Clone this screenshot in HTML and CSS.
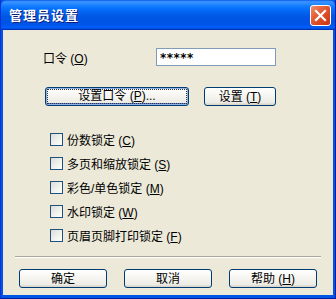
FILE: index.html
```html
<!DOCTYPE html>
<html lang="zh-CN">

<head>
  <meta charset="UTF-8" />
  <meta name="viewport" content="width=device-width, initial-scale=1.0" />
  <title>管理员设置</title>
  <link rel="stylesheet" href="styles.css">
</head>

<body>

  <div class="window">
    <div class="title-bar">
      <span class="title-text">管理员设置</span>
      <button class="close-btn" aria-label="关闭">
        <svg width="13" height="13" viewBox="0 0 13 13">
          <path d="M2 2 L11 11 M11 2 L2 11" stroke="white" stroke-width="2.2" stroke-linecap="square" />
        </svg>
      </button>
    </div>

    <div class="content">
      <div class="pw-row">
        <label class="pw-label">口令 (<u>O</u>)</label>
        <div class="pw-input">*****</div>
      </div>

      <div class="btn-row">
        <button class="btn btn-default wide-btn"><span class="focus">设置口令 (<u>P</u>)...</span></button>
        <button class="btn set-btn">设置 (<u>T</u>)</button>
      </div>

      <div class="checks">
        <label class="check-row"><span class="checkbox"></span><span>份数锁定 (<u>C</u>)</span></label>
        <label class="check-row"><span class="checkbox"></span><span>多页和缩放锁定 (<u>S</u>)</span></label>
        <label class="check-row"><span class="checkbox"></span><span>彩色/单色锁定 (<u>M</u>)</span></label>
        <label class="check-row"><span class="checkbox"></span><span>水印锁定 (<u>W</u>)</span></label>
        <label class="check-row"><span class="checkbox"></span><span>页眉页脚打印锁定 (<u>F</u>)</span></label>
      </div>

      <div class="separator"></div>

      <div class="footer">
        <button class="btn foot-btn">确定</button>
        <button class="btn foot-btn">取消</button>
        <button class="btn foot-btn">帮助 (<u>H</u>)</button>
      </div>
    </div>
  </div>

</body>

</html>
```

FILE: styles.css
```css
body {
  margin: 0;
  font-family: "Liberation Sans", "Noto Sans CJK SC", sans-serif;
  font-size: 12px;
  color: black;
}

.window {
  width: 336px;
  height: 299px;
  box-sizing: border-box;
  background-color: #0055e5;
  border-left: 1px solid #0831d9;
  border-right: 1px solid #001ea0;
  border-bottom: 1px solid #001ea0;
  padding: 0 2px 3px 2px;
  display: flex;
  flex-direction: column;
}

/* Luna style title bar */
.title-bar {
  height: 30px;
  margin: 0 -2px;
  padding: 0 4px 0 8px;
  display: flex;
  align-items: center;
  justify-content: space-between;
  background: linear-gradient(to bottom,
      #0a5ce8 0%, #3d95ff 6%, #2b8bff 12%, #127dff 20%,
      #056ffc 30%, #0262ee 42%, #0057e5 55%, #0054e3 70%,
      #0055eb 82%, #005bf5 90%, #0060f7 94%, #0033b8 97%, #0033b8 100%);
  border-radius: 6px 6px 0 0;
}

.title-text {
  color: white;
  font-family: "Noto Sans CJK SC", sans-serif;
  font-weight: bold;
  font-size: 13px;
  letter-spacing: 1px;
  text-shadow: 1px 1px 0 #0a1e7a;
  margin-top: -1px;
}

.close-btn {
  width: 21px;
  height: 21px;
  padding: 0;
  border: 1px solid white;
  border-radius: 3px;
  background: linear-gradient(135deg, #f0906e 0%, #e5613c 35%, #d8451e 70%, #c3381a 100%);
  display: flex;
  align-items: center;
  justify-content: center;
  margin-top: 1px;
}

.content {
  flex: 1;
  background-color: #ece9d8;
  padding-top: 18px;
}

.pw-row {
  display: flex;
  align-items: center;
  height: 18px;
  padding-left: 40px;
}

.pw-label {
  width: 113px;
}

.pw-input {
  width: 120px;
  height: 18px;
  box-sizing: border-box;
  border: 1px solid #7f9db9;
  background-color: white;
  padding-left: 3px;
  font-family: "DejaVu Sans", sans-serif;
  font-weight: bold;
  font-size: 12px;
  line-height: 18px;
  letter-spacing: 0.5px;
}

.btn {
  height: 19px;
  box-sizing: border-box;
  padding: 0;
  font-family: inherit;
  font-size: 12px;
  color: black;
  border: 1px solid #003c74;
  border-radius: 3px;
  background: linear-gradient(to bottom, #ffffff 0%, #f5f4ef 50%, #ecebe6 85%, #d6d0c5 100%);
  line-height: 16px;
}

.btn-row {
  display: flex;
  gap: 15px;
  margin-top: 21px;
  padding-left: 42px;
}

.wide-btn {
  width: 144px;
}

.set-btn {
  width: 72px;
}

.btn-default {
  box-shadow: inset 0 0 0 1px #8fb3e8, inset 0 -1px 0 1px #5a7edc;
  padding: 1px;
}

.focus {
  display: block;
  height: 100%;
  box-sizing: border-box;
  border: 1px dotted #333;
  line-height: 13px;
}

.checks {
  margin-top: 27px;
  padding-left: 47px;
  display: flex;
  flex-direction: column;
  gap: 11px;
}

.check-row {
  display: flex;
  align-items: center;
  height: 13px;
  gap: 4px;
}

.checkbox {
  width: 13px;
  height: 13px;
  box-sizing: border-box;
  border: 1px solid #1c5180;
  background: linear-gradient(135deg, #dcdcd7 0%, #f2f2ef 60%, #ffffff 100%);
}

.separator {
  margin: 14px 12px 0 12px;
  border-top: 1px solid #aca899;
  border-bottom: 1px solid #ffffff;
}

.footer {
  display: flex;
  gap: 17px;
  margin-top: 11px;
  padding-left: 16px;
}

.foot-btn {
  width: 88px;
}
```
